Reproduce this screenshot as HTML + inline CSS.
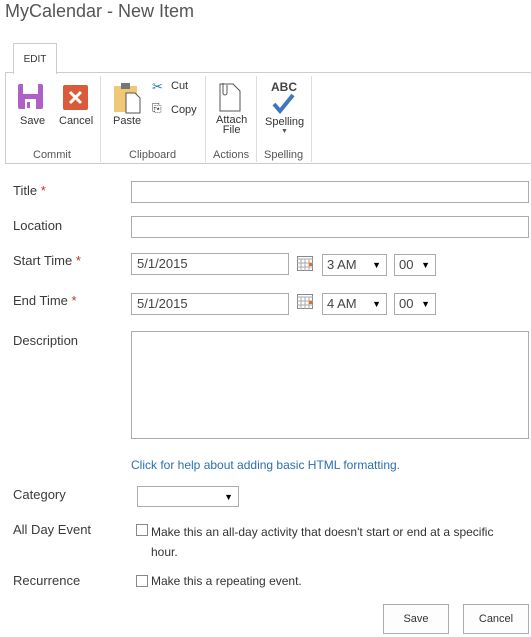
<!DOCTYPE html>
<html><head><style>
body{margin:0;width:531px;height:637px;background:#fff;font-family:"Liberation Sans",sans-serif;color:#444;position:relative;overflow:hidden}
.a{position:absolute}
.t{font-size:12px;color:#333}
.lbl{position:absolute;left:13px;font-size:13px;color:#3a3a3a}
.req{color:#b33}
.in{position:absolute;border:1px solid #ababab;background:#fff;font-size:13px;line-height:20px;padding-left:5px;box-sizing:border-box;height:22px;color:#444}
.sel{position:absolute;border:1px solid #ababab;height:22px;box-sizing:border-box;font-size:13px;line-height:20px;padding-left:4px;color:#444}
.sel:after{content:"▼";position:absolute;right:5px;top:0;font-size:9px;color:#000}
.sep{position:absolute;top:76px;width:1px;height:86px;background:#ddd}
.g{position:absolute;top:149px;font-size:11px;color:#555}
.btn{position:absolute;top:604px;width:66px;height:30px;border:1px solid #ababab;box-sizing:border-box;font-size:11px;text-align:center;line-height:28px;color:#333;background:#fdfdfd}
.cb{position:absolute;width:12px;height:12px;border:1px solid #888;background:#fff;box-sizing:border-box}
</style></head><body>
<div class="a" style="left:5px;top:1px;font-size:18px;color:#555">MyCalendar - New Item</div>
<div class="a" style="left:13px;top:43px;width:42px;height:30px;border:1px solid #ccc;border-bottom:none;background:#fff;font-size:10px;text-align:center;line-height:32px;color:#333;z-index:2">EDIT</div>
<div class="a" style="left:5px;top:72px;width:526px;height:1px;background:#ccc"></div>
<div class="a" style="left:5px;top:72px;width:1px;height:91px;background:#ccc"></div>
<div class="a" style="left:5px;top:163px;width:526px;height:1px;background:#ccc"></div>
<div class="sep" style="left:100px"></div><div class="sep" style="left:205px"></div><div class="sep" style="left:256px"></div><div class="sep" style="left:311px"></div>
<svg class="a" style="left:18px;top:84px" width="26" height="26"><rect width="25" height="25" rx="2" fill="#b05fc7"/><rect x="5" y="0" width="15" height="10" fill="#fff"/><rect x="7" y="15" width="11" height="10" fill="#fff"/><rect x="9" y="18" width="3" height="6" fill="#b05fc7"/></svg>
<div class="a t" style="left:20px;top:115px;font-size:11px">Save</div>
<svg class="a" style="left:63px;top:85px" width="25" height="25"><rect width="25" height="25" rx="2" fill="#d95b3a"/><path d="M7 7L18 18M18 7L7 18" stroke="#fff" stroke-width="3"/></svg>
<div class="a t" style="left:59px;top:115px;font-size:11px">Cancel</div>
<svg class="a" style="left:113px;top:82px" width="30" height="32"><rect x="1" y="4" width="23" height="26" fill="#f0c878"/><rect x="8" y="1" width="9" height="6" fill="#777"/><path d="M13 11h9l5 5v15h-14z" fill="#fff" stroke="#555"/></svg>
<div class="a t" style="left:113px;top:115px;font-size:11px">Paste</div>
<div class="a t" style="left:152px;top:79px;font-size:13px;color:#2a6fb0">✂</div>
<div class="a t" style="left:171px;top:80px;font-size:11px">Cut</div>
<div class="a t" style="left:152px;top:101px;font-size:12px">⎘</div>
<div class="a t" style="left:171px;top:104px;font-size:11px">Copy</div>
<svg class="a" style="left:217px;top:82px" width="26" height="30"><path d="M3 2h13l7 7v20h-20z" fill="#fff" stroke="#555"/><path d="M6 1v10a2 2 0 0 0 4 0v-8" fill="none" stroke="#555"/></svg>
<div class="a t" style="left:216px;top:115px;font-size:11px;line-height:10px;text-align:center">Attach<br>File</div>
<div class="a" style="left:271px;top:80px;font-size:12px;font-weight:bold;color:#444">ABC</div>
<svg class="a" style="left:271px;top:93px" width="26" height="22"><path d="M3 11l6 7 13-16" fill="none" stroke="#3c77c0" stroke-width="4"/></svg>
<div class="a t" style="left:265px;top:116px;font-size:11px">Spelling</div>
<div class="a" style="left:281px;top:128px;font-size:7px;color:#555">▼</div>
<div class="g" style="left:33px">Commit</div><div class="g" style="left:129px">Clipboard</div><div class="g" style="left:213px">Actions</div><div class="g" style="left:264px">Spelling</div>
<div class="lbl" style="top:183px">Title <span class="req">*</span></div>
<div class="in" style="left:131px;top:181px;width:398px"></div>
<div class="lbl" style="top:218px">Location</div>
<div class="in" style="left:131px;top:216px;width:398px"></div>
<div class="lbl" style="top:253px">Start Time <span class="req">*</span></div>
<div class="in" style="left:131px;top:253px;width:158px">5/1/2015</div>
<svg class="a" style="left:297px;top:256px" width="16" height="15"><rect x=".5" y=".5" width="15" height="14" fill="#fff" stroke="#888"/><path d="M0 3h16M4 3v12M8 3v12M12 3v12M0 7h16M0 11h16" stroke="#aaa"/><rect x="12" y="7" width="3" height="3" fill="#e07020"/></svg>
<div class="sel" style="left:322px;top:254px;width:65px">3 AM</div>
<div class="sel" style="left:394px;top:254px;width:42px">00</div>
<div class="lbl" style="top:293px">End Time <span class="req">*</span></div>
<div class="in" style="left:131px;top:293px;width:158px">5/1/2015</div>
<svg class="a" style="left:297px;top:294px" width="16" height="15"><rect x=".5" y=".5" width="15" height="14" fill="#fff" stroke="#888"/><path d="M0 3h16M4 3v12M8 3v12M12 3v12M0 7h16M0 11h16" stroke="#aaa"/><rect x="12" y="7" width="3" height="3" fill="#e07020"/></svg>
<div class="sel" style="left:322px;top:293px;width:65px">4 AM</div>
<div class="sel" style="left:394px;top:293px;width:42px">00</div>
<div class="lbl" style="top:333px">Description</div>
<div class="in" style="left:131px;top:331px;width:398px;height:108px"></div>
<div class="a" style="left:131px;top:458px;font-size:12px;color:#2a6fb0">Click for help about adding basic HTML formatting.</div>
<div class="lbl" style="top:487px">Category</div>
<div class="sel" style="left:137px;top:486px;width:102px;height:21px"></div>
<div class="lbl" style="top:522px">All Day Event</div>
<div class="cb" style="left:136px;top:524px"></div>
<div class="a" style="left:151px;top:522px;font-size:12px;color:#333;line-height:20px">Make this an all-day activity that doesn't start or end at a specific<br>hour.</div>
<div class="lbl" style="top:573px">Recurrence</div>
<div class="cb" style="left:136px;top:575px"></div>
<div class="a" style="left:151px;top:574px;font-size:12px;color:#333">Make this a repeating event.</div>
<div class="btn" style="left:383px">Save</div>
<div class="btn" style="left:463px">Cancel</div>
</body></html>
